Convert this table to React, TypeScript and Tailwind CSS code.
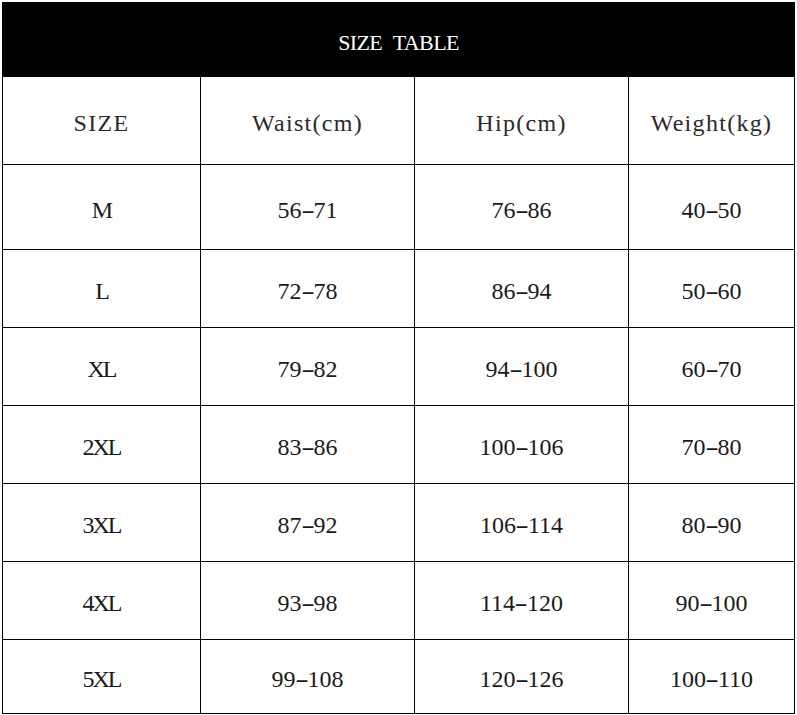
const headers = ["SIZE", "Waist(cm)", "Hip(cm)", "Weight(kg)"];

const rows = [
  { size: "M", waist: "56-71", hip: "76-86", weight: "40-50", h: "h-[84px]" },
  { size: "L", waist: "72-78", hip: "86-94", weight: "50-60", h: "h-[77px]" },
  { size: "XL", waist: "79-82", hip: "94-100", weight: "60-70", h: "h-[77px]" },
  { size: "2XL", waist: "83-86", hip: "100-106", weight: "70-80", h: "h-[77px]" },
  { size: "3XL", waist: "87-92", hip: "106-114", weight: "80-90", h: "h-[77px]" },
  { size: "4XL", waist: "93-98", hip: "114-120", weight: "90-100", h: "h-[77px]" },
  { size: "5XL", waist: "99-108", hip: "120-126", weight: "100-110", h: "h-[73px]" },
];

// SimSun-like half-width dash, wider than a Times hyphen
const Range = ({ value }: { value: string }) => {
  const [a, b] = value.split("-");
  return (
    <span>
      {a}
      <span className="inline-block w-[12px] text-center scale-x-[1.7]">-</span>
      {b}
    </span>
  );
};

export default function App() {
  return (
    <div className="w-[797px] h-[715px] bg-white pt-[2px] pl-[2px] font-['Liberation_Serif',serif]">
      <div className="w-[793px]">
        <div className="h-[74px] bg-black flex items-center justify-center pt-[7px]">
          <span className="text-white text-[22px] tracking-[-0.6px] [word-spacing:6px]">SIZE TABLE</span>
        </div>

        <div className="grid grid-cols-[197px_213px_213px_165px] gap-px bg-black p-px">
          {headers.map((label) => (
            <div
              key={label}
              className="h-[87px] bg-white flex items-center justify-center pt-[5px] text-[#2a2a2a] text-[24px] tracking-[1.3px]"
            >
              {label}
            </div>
          ))}

          {rows.map((row) => (
            <div key={row.size} className="contents">
              {[row.size, row.waist, row.hip, row.weight].map((val, i) => (
                <div
                  key={i}
                  className={`${row.h} bg-white flex items-center justify-center pt-[5px] text-[#1a1a1a] text-[24px]`}
                >
                  {i === 0 ? (
                    <span className="tracking-[-2px]">{val}</span>
                  ) : (
                    <Range value={val} />
                  )}
                </div>
              ))}
            </div>
          ))}
        </div>
      </div>
    </div>
  );
}
